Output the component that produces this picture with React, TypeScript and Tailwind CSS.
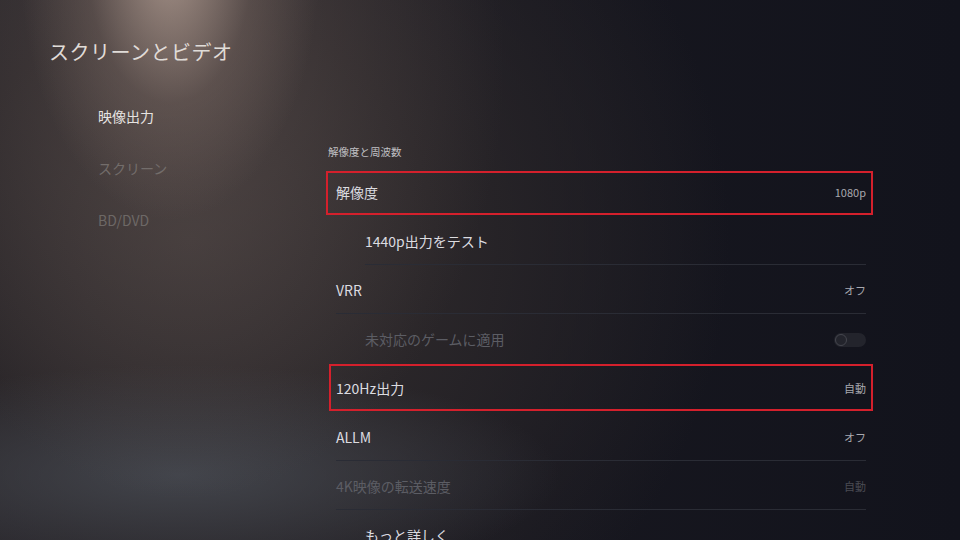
const font = "font-['Noto_Sans_CJK_JP','Noto_Sans',sans-serif]";

type Row = {
  label: string;
  value?: string;
  indent?: boolean;
  dim?: boolean;
  toggle?: boolean;
  box?: string;
  line?: string;
};

const rows: Row[] = [
  { label: "解像度", value: "1080p", box: "top-[3px] bottom-[2px] left-0 right-px" },
  { label: "1440p出力をテスト", indent: true, line: "left-[39px]" },
  { label: "VRR", value: "オフ", line: "left-[10px]" },
  { label: "未対応のゲームに適用", indent: true, dim: true, toggle: true },
  { label: "120Hz出力", value: "自動", box: "top-0 bottom-[2px] left-[3px] right-px" },
  { label: "ALLM", value: "オフ", line: "left-[10px]" },
  { label: "4K映像の転送速度", value: "自動", dim: true, line: "left-[10px]" },
  { label: "もっと詳しく", indent: true },
];

function SettingRow({ r }: { r: Row }) {
  return (
    <div className="relative h-[49px] flex items-center pl-[10px] pr-[8px] shrink-0">
      {r.box && <div className={`absolute ${r.box} border-2 border-[#d4202c]`} />}
      {r.line && <div className={`absolute bottom-px right-[8px] h-px bg-[#2a2c35] ${r.line}`} />}
      <span
        className={`text-[14px] ${r.indent ? "pl-[29px]" : ""} ${r.dim ? "text-[#5c5d64]" : "text-[#dcdce0]"}`}
      >
        {r.label}
      </span>
      <div className="ml-auto flex items-center">
        {r.value && (
          <span className={`text-[11px] ${r.dim ? "text-[#4a4b53]" : "text-[#a8a8ae]"}`}>{r.value}</span>
        )}
        {r.toggle && (
          <div className="w-[32px] h-[14px] rounded-full bg-[#23242c] flex items-center px-px">
            <div className="w-[12px] h-[12px] rounded-full border border-[#45464e]" />
          </div>
        )}
      </div>
    </div>
  );
}

export default function App() {
  return (
    <div
      className={`${font} w-[960px] h-[540px] overflow-hidden relative bg-[#14151e] bg-[radial-gradient(ellipse_150px_260px_at_170px_-40px,rgba(190,168,156,0.8),rgba(130,112,105,0.35)_55%,transparent_100%),radial-gradient(ellipse_320px_440px_at_185px_60px,rgba(110,95,90,0.45),transparent_100%),radial-gradient(ellipse_380px_110px_at_180px_475px,rgba(72,76,84,0.8),transparent_100%),radial-gradient(ellipse_540px_520px_at_190px_240px,#3a3435,#2a2629_45%,transparent_100%),linear-gradient(90deg,#24232a,#17171f_55%,#12131c)]`}
    >
      <div className="flex h-full">
        {/* left column */}
        <div className="w-[326px] shrink-0 flex flex-col">
          <h1 className="pl-[49px] pt-[38px] text-[20px] leading-[28px] text-[#e0dcd8] tracking-[0.5px]">
            スクリーンとビデオ
          </h1>
          <nav className="pl-[98px] pt-[40px] flex flex-col gap-[32px] text-[14px] leading-[20px]">
            <span className="text-[#e6e3e1]">映像出力</span>
            <span className="text-[#736d6b]">スクリーン</span>
            <span className="text-[#6d6866]">BD/DVD</span>
          </nav>
        </div>

        {/* right column */}
        <div className="w-[548px] shrink-0 flex flex-col pt-[144px]">
          <div className="pl-[2px] h-[16px] text-[10.5px] leading-[16px] text-[#c0c0c4]">解像度と周波数</div>
          <div className="h-[8px] shrink-0" />
          {rows.map((r) => (
            <SettingRow key={r.label} r={r} />
          ))}
        </div>
      </div>
    </div>
  );
}
